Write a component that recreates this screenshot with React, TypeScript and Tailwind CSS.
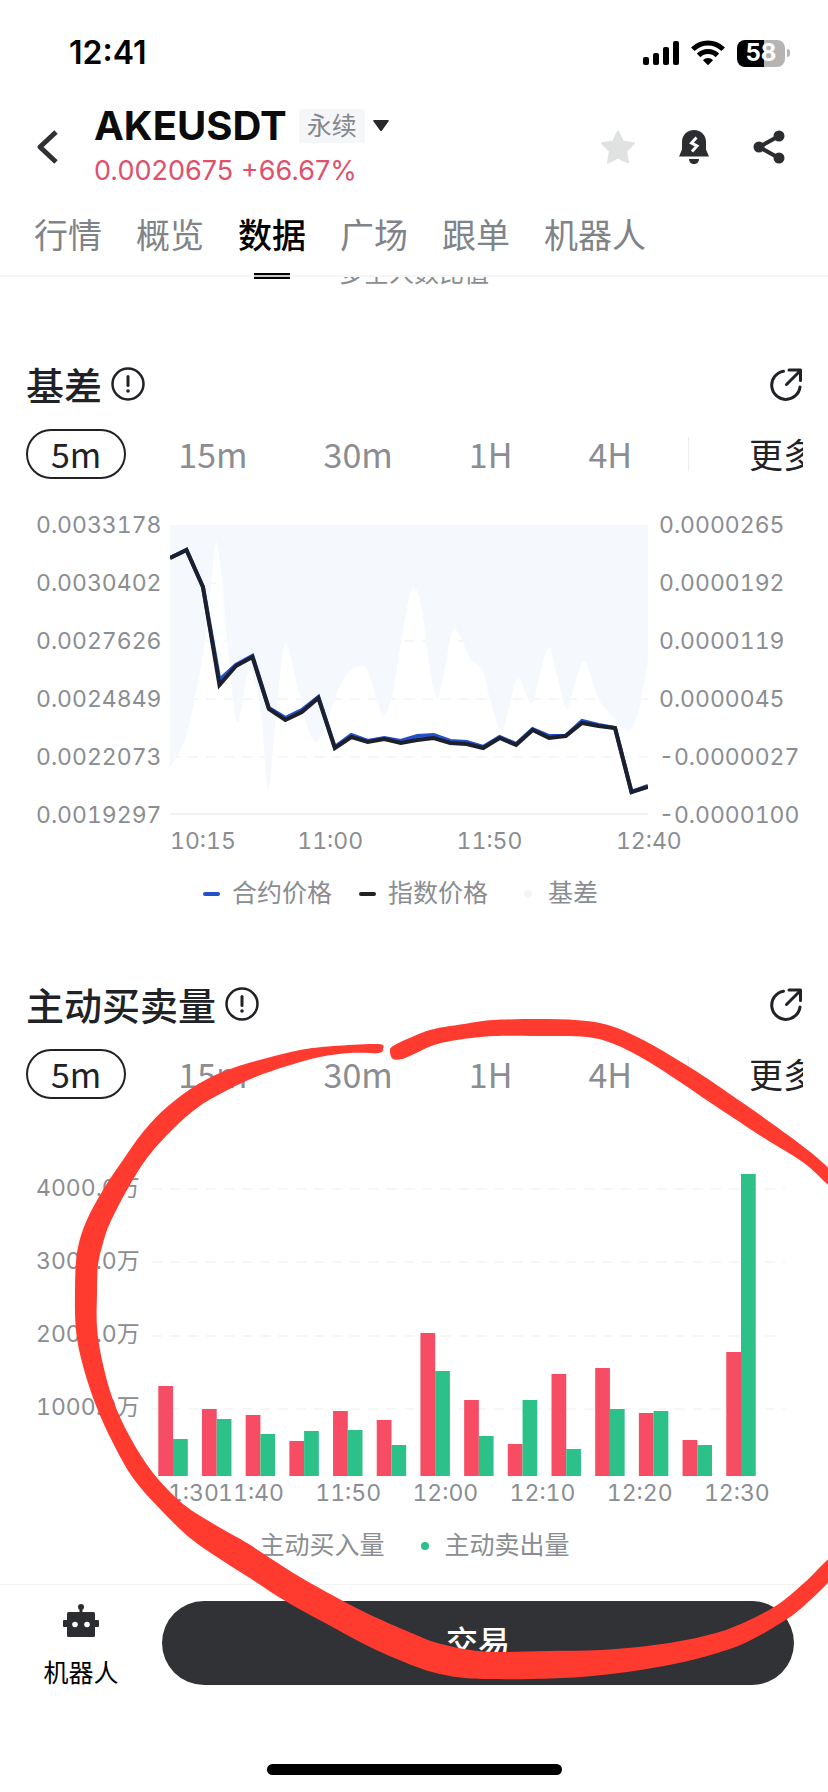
import { useState } from 'react'

type Point = [number, number]

const tabs = ['行情', '概览', '数据', '广场', '跟单', '机器人']
const periods = ['5m', '15m', '30m', '1H', '4H']

const priceTicks = ['0.0033178', '0.0030402', '0.0027626', '0.0024849', '0.0022073', '0.0019297']
const basisTicks = ['0.0000265', '0.0000192', '0.0000119', '0.0000045', '-0.0000027', '-0.0000100']
const volumeTicks = ['4000.0万', '3000.0万', '2000.0万', '1000.0万']

// plot heights, top = 0 and bottom = 290
const indexPrice = [
  33, 25, 62, 160, 141, 132, 184, 195, 187, 173, 223, 212, 217, 214, 218, 215, 213, 218, 219, 223, 213, 220, 205, 213,
  211, 198, 201, 203, 267, 262,
]
const contractLift = [0, 0, 0, 5, 1, 1, 1, 2, 2, 1, 1, 2, 1, 1, 2, 4, 3, 2, 2, 1, 1, 1, 1, 2, 0, 2, 1, 0, 0, 1]

const basis: Point[] = [
  [0, 242], [10, 226], [18, 205], [32, 135], [41, 60], [46, 17], [52, 55], [58, 125], [67, 197], [77, 150], [83, 150],
  [91, 190], [98, 264], [106, 190], [115, 119], [128, 165], [140, 210], [150, 213], [166, 170], [176, 150], [187, 142],
  [197, 145], [205, 170], [213, 191], [222, 170], [230, 120], [240, 68], [247, 67], [253, 95], [260, 150], [267, 173],
  [274, 145], [282, 106], [290, 112], [299, 133], [312, 145], [318, 170], [330, 206], [338, 185], [347, 153],
  [361, 178], [369, 150], [378, 123], [386, 150], [396, 184], [404, 160], [413, 136], [422, 158], [430, 178],
  [444, 194], [458, 206], [468, 185], [477, 135],
]

const volumes = [
  [90, 37], [67, 57], [61, 42], [35, 45], [65, 46], [56, 31], [143, 105], [76, 40],
  [32, 76], [102, 27], [108, 67], [63, 65], [36, 31], [124, 302],
]

const longStroke: Point[] = [
  [378, 1044], [333, 1046], [300, 1050], [267, 1058], [233, 1068], [200, 1083], [167, 1107], [143, 1132], [123, 1160],
  [103, 1190], [86, 1222], [77, 1253], [75, 1293], [76, 1330], [82, 1362], [95, 1403], [113, 1443], [133, 1478],
  [160, 1509], [190, 1538], [220, 1559], [253, 1580], [287, 1602], [327, 1624], [370, 1647], [414, 1666], [440, 1674],
  [465, 1678], [490, 1679], [531, 1679], [581, 1677], [627, 1672], [674, 1664], [714, 1654], [747, 1642], [784, 1621],
  [806, 1604], [830, 1580], [832, 1568], [830, 1558], [804, 1583], [774, 1607], [731, 1628], [691, 1639], [647, 1646],
  [601, 1650], [547, 1651], [494, 1652], [464, 1649], [434, 1642], [414, 1634], [377, 1618], [343, 1601], [300, 1577],
  [273, 1560], [247, 1543], [217, 1526], [183, 1504], [153, 1473], [130, 1437], [113, 1400], [102, 1360], [97, 1327],
  [97, 1293], [98, 1265], [103, 1243], [110, 1223], [127, 1190], [147, 1158], [173, 1129], [197, 1108], [220, 1094],
  [253, 1078], [287, 1066], [320, 1057], [350, 1053], [378, 1053], [383, 1049],
]
const shortStroke: Point[] = [
  [393, 1046], [414, 1036], [434, 1029], [464, 1024], [494, 1020], [547, 1019], [587, 1021], [614, 1027], [647, 1042],
  [691, 1068], [727, 1092], [767, 1120], [809, 1151], [830, 1170], [832, 1178], [830, 1186], [804, 1163], [764, 1138],
  [714, 1105], [674, 1078], [644, 1059], [614, 1044], [587, 1037], [547, 1036], [494, 1036], [457, 1040], [434, 1045],
  [414, 1054], [402, 1059], [393, 1059], [390, 1052],
]

// Catmull-Rom through the points, as cubic segments
function smooth(pts: Point[], closed = false) {
  const n = pts.length
  const at = (i: number) => (closed ? pts[(i + n) % n] : pts[Math.max(0, Math.min(n - 1, i))])
  let d = `M${pts[0][0]} ${pts[0][1]}`
  for (let i = 0; i < (closed ? n : n - 1); i++) {
    const [a, b, c, e] = [at(i - 1), at(i), at(i + 1), at(i + 2)]
    d += `C${b[0] + (c[0] - a[0]) / 6} ${b[1] + (c[1] - a[1]) / 6} ${c[0] - (e[0] - b[0]) / 6} ${c[1] - (e[1] - b[1]) / 6} ${c[0]} ${c[1]}`
  }
  return closed ? d + 'Z' : d
}

const linePoints = (ys: number[]) => ys.map((y, i) => `${(i * 477) / (ys.length - 1)},${y}`).join(' ')

function StatusBar() {
  return (
    <div className="h-[102px] pl-[69px] pr-[38px] pt-1 flex items-center justify-between text-black">
      <span className="text-[32px] font-semibold leading-none">12:41</span>
      <div className="flex items-center gap-3">
        <svg width="36" height="24" viewBox="0 0 36 24" aria-hidden="true">
          <rect x="0" y="16" width="6" height="8" rx="2" />
          <rect x="10" y="12" width="6" height="12" rx="2" />
          <rect x="20" y="6" width="6" height="18" rx="2" />
          <rect x="30" y="0" width="6" height="24" rx="2" />
        </svg>
        <svg width="34" height="26" viewBox="0 0 34 26" fill="none" stroke="black" strokeWidth="5" aria-hidden="true">
          <path d="M1.8 9.2a21.5 21.5 0 0 1 30.4 0" />
          <path d="M7.6 15.4a13.4 13.4 0 0 1 18.8 0" />
          <path d="M17 25.2l-5-5c2.6-2.8 7.4-2.8 10 0z" fill="black" stroke="none" />
        </svg>
        <div className="flex items-center gap-[2px]">
          <span className="w-12 h-[27px] rounded-lg flex items-center justify-center bg-linear-to-r from-black from-57% to-[#b4b4b4] to-57% text-white text-2xl font-bold leading-none">
            58
          </span>
          <span className="w-[3px] h-2 rounded-r-full bg-[#b4b4b4]" />
        </div>
      </div>
    </div>
  )
}

function Header() {
  const [active, setActive] = useState('数据')

  return (
    <header className="border-b-2 border-[#f5f5f6] bg-white">
      <StatusBar />

      {/* Pair and actions */}
      <div className="h-[90px] pl-9 pr-[42px] flex items-center">
        <button aria-label="返回" className="w-[22px] mr-[36px]">
          <svg width="22" height="34" viewBox="0 0 22 34" fill="none" stroke="#2f3134" strokeWidth="5" strokeLinejoin="round">
            <path d="M20 2L4 17l16 15" />
          </svg>
        </button>
        <div className="flex-1">
          <div className="h-12 flex items-center">
            <h1 className="text-[40px] leading-none font-bold text-[#0b0b0c]">AKEUSDT</h1>
            <button className="flex items-center gap-2 ml-3">
              <span className="px-2 h-[34px] leading-[34px] bg-[#f5f6f8] rounded text-[25px] text-[#85888c]">永续</span>
              <svg width="16" height="12" viewBox="0 0 16 12" fill="#26282b" aria-hidden="true">
                <path d="M1 0h14q1.5 0 .6 1.2L9 10.5q-1 1.200-2 0L.4 1.2Q-.5 0 1 0z" />
              </svg>
            </button>
          </div>
          <p className="h-[42px] leading-[42px] text-[27px] text-[#e0506c]">0.0020675 +66.67%</p>
        </div>
        <div className="flex items-center gap-[42px]">
          <button aria-label="收藏">
            <svg width="36" height="36" viewBox="0 0 36 36" fill="#e0e2e2" stroke="#e0e2e2" strokeWidth="2" strokeLinejoin="round">
              <path d="M18 2.5l4.8 10 11.2 1.8-8 8 2 11.2-10-5-10 5 2-11.2-8-8 11.2-1.8z" />
            </svg>
          </button>
          <button aria-label="提醒">
            <svg width="32" height="34" viewBox="0 0 32 34" fill="#2b2d30">
              <path d="M16 0C9 0 4 5.2 4 12v7.5L1 26.5h30l-3-7V12C28 5.2 23 0 16 0z" />
              <path d="M11 29h10c0 3-2.2 5-5 5s-5-2-5-5z" />
              <path d="M18.500 7.500l-5 5.500 5.500 3-5 5.500" fill="none" stroke="white" strokeWidth="3" />
            </svg>
          </button>
          <button aria-label="分享">
            <svg width="34" height="36" viewBox="0 0 34 36" fill="#2b2d30" stroke="#2b2d30" strokeWidth="4">
              <path d="M27 7L7 18l20 11" fill="none" />
              <circle cx="27" cy="7" r="3.5" />
              <circle cx="7" cy="18" r="3.5" />
              <circle cx="27" cy="29" r="3.5" />
            </svg>
          </button>
        </div>
      </div>

      <nav className="h-[83px] pl-[34px] flex gap-[34px]">
        {tabs.map((tab) => (
          <a
            key={tab}
            href="#"
            onClick={() => setActive(tab)}
            className={
              tab === active
                ? 'relative h-full leading-[88px] text-[34px] font-medium text-black'
                : 'h-full leading-[88px] text-[34px] text-[#808387]'
            }
          >
            {tab}
            {tab === active && <span className="absolute -bottom-1 left-4 right-4 h-[6px] border-y-2 border-black bg-[#c9cbca]" />}
          </a>
        ))}
      </nav>
    </header>
  )
}

function SectionHead({ title }: { title: string }) {
  const [period, setPeriod] = useState('5m')

  return (
    <div className="font-['Noto_Sans_CJK_SC',sans-serif]">
      <div className="h-12 flex items-center">
        <h2 className="text-[38px] leading-none font-medium text-[#202226]">{title}</h2>
        <button aria-label="说明" className="ml-[9px]">
          <svg width="34" height="34" viewBox="0 0 34 34" fill="none" stroke="#202226" strokeWidth="2.5" strokeLinecap="round">
            <circle cx="17" cy="17" r="15.5" />
            <path d="M17 9.5v9" strokeWidth="3" />
            <circle cx="17" cy="24" r="1.8" fill="#202226" stroke="none" />
          </svg>
        </button>
        <button aria-label="打开" className="ml-auto">
          <svg width="34" height="34" viewBox="0 0 34 34" fill="none" stroke="#202226" strokeWidth="3" strokeLinecap="round">
            <path d="M14.5 4.2A14.2 14.2 0 1 0 31 20" />
            <path d="M17.5 17.5L31 4M20 3h11.500v10.500" strokeLinejoin="round" />
          </svg>
        </button>
      </div>

      <div className="mt-[21px] h-[50px] flex items-center overflow-hidden text-[34px] whitespace-nowrap">
        <div className="flex shrink-0 gap-7">
          {periods.map((p) => (
            <button
              key={p}
              onClick={() => setPeriod(p)}
              className={
                p === period
                  ? 'h-[50px] px-[23px] leading-[44px] rounded-full border-2 border-[#202226] text-[#202226]'
                  : 'h-[50px] px-6 leading-[48px] text-[#8a8d91]'
              }
            >
              {p}
            </button>
          ))}
        </div>
        <span className="ml-8 w-px h-[34px] bg-[#ececee] shrink-0" />
        <button className="ml-[60px] shrink-0 leading-[50px] text-[#202226]">更多</button>
      </div>
    </div>
  )
}

function BasisChart() {
  return (
    <div className="mt-[17px] pl-[10px] flex items-start text-[#8a8d91] text-[23px] tabular-nums">
      <ul className="w-[134px] shrink-0">
        {priceTicks.map((t) => (
          <li key={t} className="h-[58px] leading-[58px]">{t}</li>
        ))}
      </ul>
      <div className="flex-1 pt-[29px]">
        <svg viewBox="0 0 477 290" preserveAspectRatio="none" className="w-full h-[290px] block" role="img" aria-label="基差">
          {[58, 116, 174, 232].map((y) => (
            <line key={y} x1="0" x2="477" y1={y} y2={y} stroke="#f5f6f7" strokeWidth="2" strokeDasharray="10 8" />
          ))}
          <path d={`${smooth(basis)}V0H0Z`} fill="#f5f9fe" />
          <line x1="0" x2="477" y1="289" y2="289" stroke="#f1f2f3" strokeWidth="2" />
          <polyline points={linePoints(indexPrice.map((y, i) => y - contractLift[i]))} fill="none" stroke="#2450c8" strokeWidth="4" />
          <polyline points={linePoints(indexPrice)} fill="none" stroke="#1c1f2c" strokeWidth="4" />
        </svg>
        <div className="-mr-8 pt-[11px] flex leading-[30px]">
          <span className="w-0 grow-[127]">10:15</span>
          <span className="w-0 grow-[159]">11:00</span>
          <span className="w-0 grow-[159]">11:50</span>
          <span className="w-0 grow-[64]">12:40</span>
        </div>
      </div>
      <ul className="w-[155px] pl-[11px] shrink-0">
        {basisTicks.map((t) => (
          <li key={t} className="h-[58px] leading-[58px]">{t}</li>
        ))}
      </ul>
    </div>
  )
}

function VolumeChart() {
  return (
    <div className="mt-[51px] pl-[10px] pr-[18px] flex items-start text-[#8a8d91] text-[23px] tabular-nums">
      <ul className="w-[116px] shrink-0 whitespace-nowrap">
        {volumeTicks.map((t) => (
          <li key={t} className="h-[73px] leading-[76px]">{t}</li>
        ))}
      </ul>
      <div className="flex-1">
        <svg viewBox="0 0 632 326" preserveAspectRatio="none" className="w-full h-[326px] block" role="img" aria-label="主动买卖量">
          {[39, 112, 186, 259].map((y) => (
            <line key={y} x1="0" x2="632" y1={y} y2={y} stroke="#f6f6f7" strokeWidth="2" strokeDasharray="10 8" />
          ))}
          {volumes.map(([buy, sell], i) => (
            <g key={i} transform={`translate(${6.3 + i * 43.62} 0)`}>
              <rect y={326 - buy} width="14.7" height={buy} fill="#f74d64" />
              <rect x="14.7" y={326 - sell} width="14.7" height={sell} fill="#2bc188" />
            </g>
          ))}
        </svg>
        <div className="pt-[2px] pr-[18px] pl-px flex leading-[30px]">
          <span className="w-0 grow-[65]">11:30</span>
          <span className="w-0 grow-[97]">11:40</span>
          <span className="w-0 grow-[97]">11:50</span>
          <span className="w-0 grow-[97]">12:00</span>
          <span className="w-0 grow-[97]">12:10</span>
          <span className="w-0 grow-[97]">12:20</span>
          <span className="w-0 grow-[63]">12:30</span>
        </div>
      </div>
    </div>
  )
}

function RobotIcon() {
  return (
    <svg width="36" height="33" viewBox="0 0 36 33" fill="#2b2d30" aria-hidden="true">
      <circle cx="18" cy="3" r="3" />
      <rect x="16.5" y="3" width="3" height="6" />
      <rect x="4" y="8" width="28" height="25" rx="1.5" />
      <rect x="0" y="16" width="36" height="7" rx="1" />
      <circle cx="12" cy="20.5" r="2.8" fill="white" />
      <circle cx="24" cy="20.5" r="2.8" fill="white" />
    </svg>
  )
}

export default function App() {
  return (
    <div className="relative overflow-hidden bg-white font-['Inter','Noto_Sans_CJK_SC',sans-serif]">
      <Header />

      <main className="overflow-hidden">
        <p className="-mt-[22px] h-[37px] leading-9 text-center text-[25px] text-[#8a8d91] [clip-path:inset(22px_0_0_0)]">
          多空人数比值
        </p>

        <section className="pt-[68px] pl-[26px] pr-[25px]">
          <SectionHead title="基差" />
          <BasisChart />
          <div className="mt-5 pr-7 h-9 flex items-center justify-center text-[25px] text-[#8a8d91]">
            <span className="w-[17px] h-1 rounded-full bg-[#2450c8] mr-3" />
            合约价格
            <span className="w-[17px] h-1 rounded-full bg-[#202226] ml-[27px] mr-3" />
            指数价格
            <span className="w-2 h-2 rounded-full bg-[#f2f4f7] ml-9 mr-4" />
            基差
          </div>
        </section>

        <section className="pt-[68px] pl-[26px] pr-[25px] pb-5">
          <SectionHead title="主动买卖量" />
          <VolumeChart />
          <div className="mt-5 pr-6 h-9 flex items-center justify-center text-[25px] text-[#8a8d91]">
            <span className="w-2 h-2 rounded-full bg-[#f74d64] mr-4" />
            主动买入量
            <span className="w-2 h-2 rounded-full bg-[#2bc188] ml-9 mr-4" />
            主动卖出量
          </div>
        </section>
      </main>

      <footer className="border-t border-[#f3f3f4] pt-4 pb-[17px] bg-white">
        <div className="pr-[34px] flex items-start">
          <button className="w-[162px] pt-[3px] flex flex-col items-center gap-5 text-[25px] leading-8 text-black">
            <RobotIcon />
            机器人
          </button>
          <button className="flex-1 h-[84px] rounded-full bg-[#303236] text-white text-[32px] font-medium">交易</button>
        </div>
        <div className="mt-[75px] mx-auto w-[295px] h-[11px] rounded-full bg-black" />
      </footer>

      {/* Marker drawn over the screen */}
      <svg
        viewBox="0 0 828 1792"
        preserveAspectRatio="none"
        className="absolute inset-0 w-full h-full pointer-events-none"
        fill="#ff3a2f"
        aria-hidden="true"
      >
        <path d={smooth(longStroke, true)} />
        <path d={smooth(shortStroke, true)} />
      </svg>
    </div>
  )
}
